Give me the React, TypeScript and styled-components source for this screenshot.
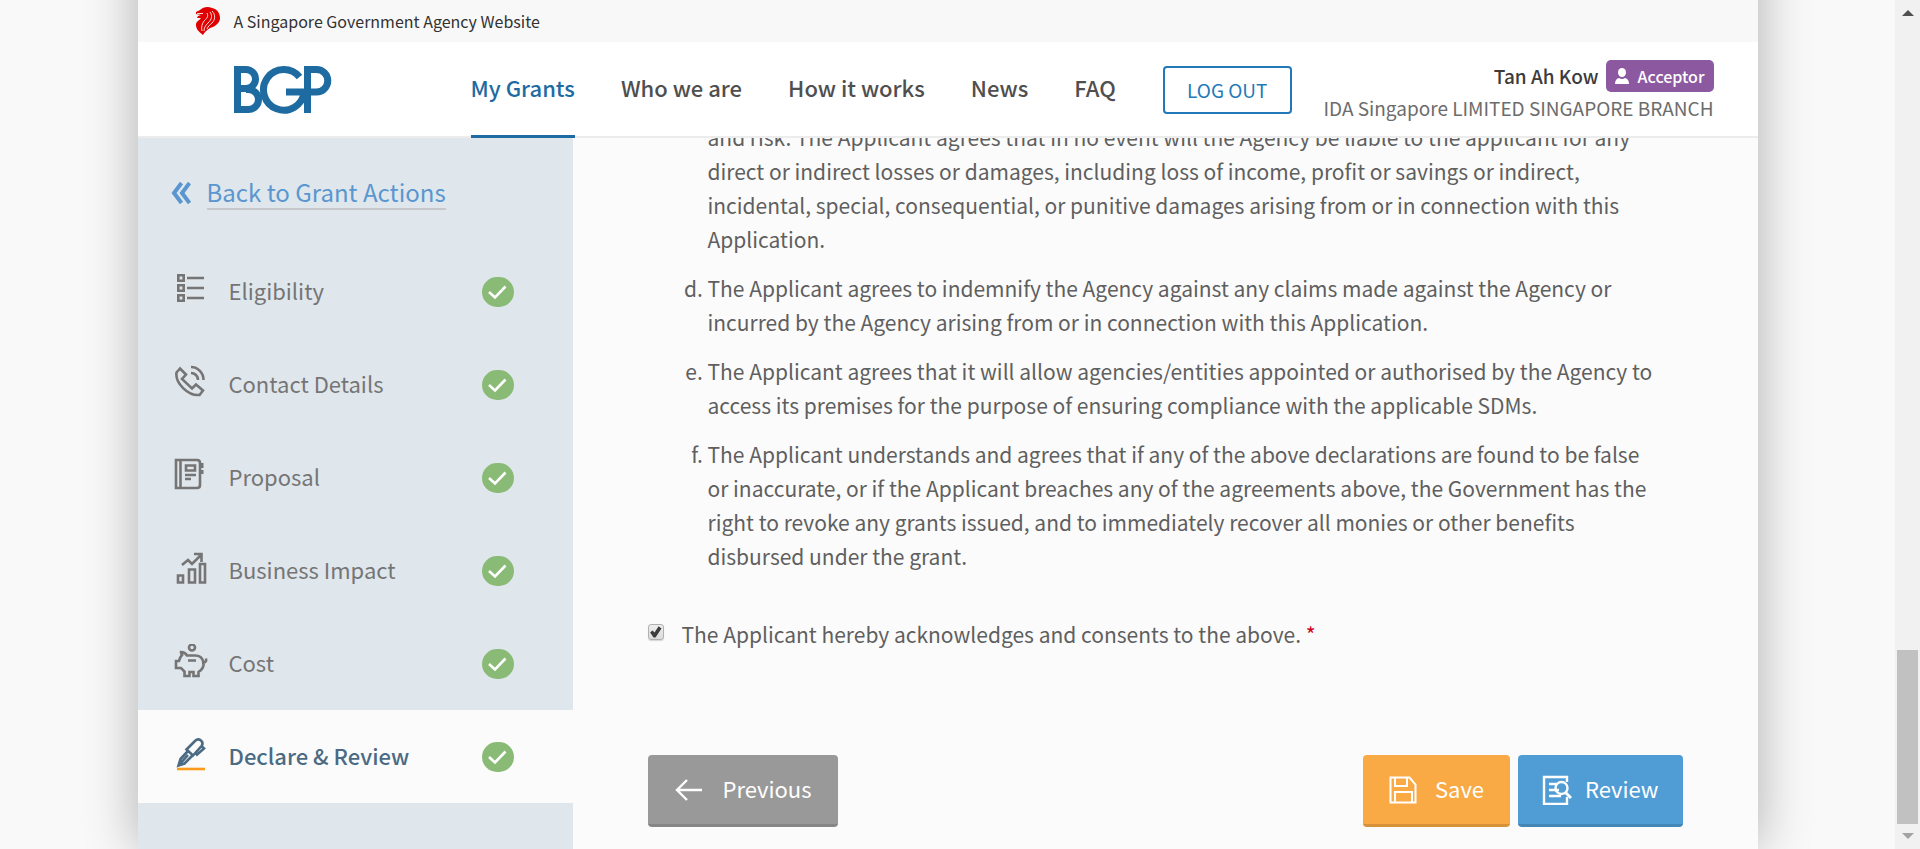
import React from 'react';
import styled, { createGlobalStyle, css } from 'styled-components';

const Global = createGlobalStyle`
  *, *::before, *::after { box-sizing: border-box; }
  body {
    margin: 0;
    background: #f9f9f9;
    color: #5f5f5f;
    font-family: "Noto Sans CJK SC", "Noto Sans", sans-serif;
    font-size: 22px;
    line-height: 34px;
  }
`;

const Page = styled.div`
  display: grid;
  grid-template-columns: minmax(0, 1fr) 25px;
  min-height: 100vh;
  overflow: hidden;
`;

const Sheet = styled.div`
  display: flex;
  flex-direction: column;
  width: 100%;
  max-width: 1620px;
  margin: -64px auto 0;
  padding-top: 64px;
  background: #fbfbfb;
  box-shadow: 0 0 50px rgba(0, 0, 0, 0.3);
`;

const AgencyBar = styled.div`
  display: flex;
  align-items: center;
  gap: 13px;
  height: 42px;
  padding-left: 57px;
  background: #f8f8f8;
  color: #323232;
  font-size: 16px;
`;

const Header = styled.header`
  position: relative;
  z-index: 1;
  display: flex;
  height: 96px;
  padding: 0 44px 0 96px;
  background: #fff;
  border-bottom: 2px solid #ececec;
`;

const LogoLink = styled.a`
  display: flex;
  align-items: center;
  width: 237px;
`;

const Nav = styled.nav`
  display: flex;
  gap: 46px;
`;

const NavLink = styled.a<{ $active?: boolean }>`
  height: 96px;
  color: ${(p) => (p.$active ? '#1e6ba1' : '#4f4f4f')};
  border-bottom: 3px solid ${(p) => (p.$active ? '#1e6ba1' : 'transparent')};
  font-size: 22px;
  font-weight: 500;
  line-height: 90px;
  text-decoration: none;
  white-space: nowrap;
`;

const LogOut = styled.button`
  width: 129px;
  height: 48px;
  margin: 24px 0 0 47px;
  padding: 0;
  border: 2px solid #217ab7;
  border-radius: 4px;
  background: #fff;
  color: #217ab7;
  font: inherit;
  font-size: 19px;
  white-space: nowrap;
`;

const Account = styled.div`
  display: flex;
  flex-direction: column;
  align-items: flex-end;
  margin-left: auto;
  padding-top: 18px;
  color: #6c6c6c;
  font-size: 19px;
  line-height: 32px;
  white-space: nowrap;
`;

const AccountName = styled.div`
  display: flex;
  gap: 7px;
  color: #3c3c3c;
  font-weight: 500;
`;

const Role = styled.span`
  display: flex;
  align-items: center;
  gap: 9px;
  padding: 0 9px;
  border-radius: 5px;
  background: #8c59a0;
  color: #fff;
  font-size: 16px;
  font-weight: 500;
`;

const Columns = styled.div`
  display: grid;
  grid-template-columns: 435px minmax(0, 1fr);
  flex: 1;
`;

const Sidebar = styled.aside`
  background: #dfe6ec;
`;

const BackLink = styled.a`
  display: flex;
  align-items: center;
  gap: 16px;
  height: 107px;
  padding: 2px 0 0 33px;
  color: #5a96cf;
  font-size: 24px;
  line-height: 32px;
  text-decoration: none;
  span {
    border-bottom: 2px solid #c6c8cb;
  }
`;

const Steps = styled.ul`
  margin: 0;
  padding: 0;
  list-style: none;
`;

const Step = styled.a<{ $active?: boolean }>`
  display: flex;
  align-items: center;
  height: 93px;
  padding: 0 59px 0 36px;
  color: #757575;
  text-decoration: none;
  ${(p) =>
    p.$active &&
    css`
      background: #fbfbfb;
      color: #4b6a84;
      font-weight: 500;
    `}
`;

const StepName = styled.span`
  flex: 1;
  margin: 0 0 4px 21px;
`;

const Content = styled.main`
  padding: 0 75px 22px;
`;

const Clauses = styled.ol`
  margin: -18px 0 0;
  padding: 0 26px 0 60px;
  font-size: 21px;
  list-style: lower-alpha;
`;

const Clause = styled.li<{ $continued?: boolean }>`
  margin-bottom: 15px;
  ${(p) => p.$continued && 'list-style: none;'}
`;

const Consent = styled.label`
  display: flex;
  align-items: flex-start;
  gap: 18px;
  margin-top: 44px;
  font-size: 21px;
`;

const Tick = styled.input`
  appearance: none;
  width: 16px;
  height: 16px;
  margin: 7px 0 0;
  border: 1px solid #b0b0b0;
  border-radius: 3px;
  background: linear-gradient(#ededed, #dcdcdc);
  box-shadow: 0 1px 1px rgba(0, 0, 0, 0.15);
  &:checked::before {
    content: '';
    display: block;
    width: 12px;
    height: 12px;
    margin: 1px;
    background: #3d3d3d;
    clip-path: polygon(5% 55%, 25% 38%, 42% 55%, 76% 2%, 100% 20%, 50% 95%, 34% 95%);
  }
`;

const Required = styled.span`
  color: #d0021b;
`;

const Actions = styled.div`
  display: flex;
  gap: 8px;
  margin-top: 104px;
`;

const tones = {
  grey: { face: '#999999', edge: '#868686', pad: 26, gap: 21 },
  orange: { face: '#f9aa44', edge: '#d6933c', pad: 26, gap: 18 },
  blue: { face: '#509dd5', edge: '#4487b7', pad: 24, gap: 13 },
};

const Action = styled.button<{ $tone: keyof typeof tones }>`
  display: flex;
  align-items: center;
  gap: ${(p) => tones[p.$tone].gap}px;
  height: 72px;
  padding: 0 ${(p) => tones[p.$tone].pad}px;
  border: 0;
  border-bottom: 3px solid ${(p) => tones[p.$tone].edge};
  border-radius: 4px;
  background: ${(p) => tones[p.$tone].face};
  color: #fff;
  font: inherit;
  &:first-child {
    margin-right: auto;
  }
`;

const ActionName = styled.span`
  margin-bottom: 4px;
`;

const Scroller = styled.div`
  display: flex;
  flex-direction: column;
  align-items: center;
  padding: 10px 0;
  background: #f1f1f1;
`;

const Thumb = styled.div`
  width: 21px;
  height: 174px;
  margin: auto 0 9px;
  background: #c1c1c1;
`;

const Lion = () => (
  <svg width="26" height="30" viewBox="0 0 26 30" aria-hidden="true">
    <path
      fill="#e00000"
      d="M1 6 5 4C8 1 13 0 17 2c5 1 8 5 8 10 0 4-3 7-7 9-4 1-8 4-10 8-4-3-7-6-7-10 0-4 3-4 5-7L2 12l1-2 3-1-5-1Z"
    />
    <path
      fill="none"
      stroke="#f8f8f8"
      strokeWidth="0.900"
      d="M2 7.500h6M12 7c2 4-1 6-3 8-2 3-3 6-2 10M15 6c3 4 1 8-1 10-3 3-5 5-5 9M17 5c4 4 3 9 0 12-2 2-4 3-5 6"
    />
  </svg>
);

const Logo = () => (
  <svg width="98" height="50" viewBox="0 0 98 50" role="img" aria-label="BGP">
    <g fill="none" stroke="#1e6ba1" strokeWidth="7">
      <path d="M3.500 2V49M0 5.500H12A9 9 0 0 1 12 24.500H3.500M12 25.500H14.500A10 10 0 0 1 14.500 45.500H0" />
      <path d="M65.500 13A20.300 20.300 0 1 0 70 28M52 28H82.500A11.200 11.200 0 0 0 82.500 5.500H70M73.500 2V49" />
    </g>
  </svg>
);

const Icon = ({ children, size = 28 }: { children: React.ReactNode; size?: number }) => (
  <svg width={size} height={size} viewBox={`0 0 ${size} ${size}`} fill="none" stroke="currentColor" strokeWidth="2" aria-hidden="true">
    {children}
  </svg>
);

const StepIcon = styled.svg`
  width: 34px;
  height: 34px;
  margin-bottom: 5px;
  fill: none;
  stroke: currentColor;
  stroke-width: 2.6;
`;

const Check = () => (
  <svg width="32" height="30" viewBox="0 0 32 30" role="img" aria-label="Completed">
    <rect width="32" height="30" rx="15" fill="#89bb76" />
    <path d="m7 15 6 5.500L23.500 9.500" fill="none" stroke="#fff" strokeWidth="2.600" />
  </svg>
);

const steps = [
  {
    name: 'Eligibility',
    icon: <path d="M4.300 3.300h5.400v5.400H4.300zM4.300 13.300h5.400v5.400H4.300zM4.300 23.300h5.400v5.400H4.300zM13 6h17M13 16h17M13 26h17" />,
  },
  {
    name: 'Contact Details',
    icon: (
      <path d="M6 3.500 2.500 7.500C1 18 14 31 25.500 30L29 25.500l-7-6-4 4L8 14l4-4.500ZM17 2c7 0 12.500 6 12.500 13M17 8c4 0 7 3 7 7" />
    ),
  },
  {
    name: 'Proposal',
    icon: (
      <>
        <path d="M2 2h21q3 0 3 3v22q0 3-3 3H2zM6.500 2v28M12 7.500h9v5h-9zM11 17h11M11 21h6" />
        <path d="M28 5v5M28 12v4" strokeWidth="3" />
      </>
    ),
  },
  {
    name: 'Business Impact',
    icon: <path d="M4 24.500h5v7H4zM15 18.500h6v13h-6zM26 13h5v18.500h-5zM8 14l6-5 4 4 9-9M20 3h7.500v8" />,
  },
  {
    name: 'Cost',
    icon: (
      <>
        <path d="M8 11q-1-1-1-3 4 0 6 3.500h8c9 0 12 11 3.500 16.500V32h-5v-4h-4v4h-5v-4.500L7 24H2v-7h3q1-4 3-6ZM14 16.500h8M32 14.500q1 4-4 5" />
        <circle cx="18" cy="3.500" r="3" />
      </>
    ),
  },
  {
    name: 'Declare & Review',
    icon: (
      <>
        <path d="m12.500 12.500 8.500-8.500c4-4 9.500 1 6.500 5l-8.500 9.500ZM14 14l-7.500 8-2 6.500 6-2 8-8M14 18l-9 10M27 8.500l3 3-8 7" />
        <path d="M3 32h28" stroke="#fb9a1c" />
      </>
    ),
    active: true,
  },
];

const clauses = [
  'and risk. The Applicant agrees that in no event will the Agency be liable to the applicant for any direct or indirect losses or damages, including loss of income, profit or savings or indirect, incidental, special, consequential, or punitive damages arising from or in connection with this Application.',
  'The Applicant agrees to indemnify the Agency against any claims made against the Agency or incurred by the Agency arising from or in connection with this Application.',
  'The Applicant agrees that it will allow agencies/entities appointed or authorised by the Agency to access its premises for the purpose of ensuring compliance with the applicable SDMs.',
  'The Applicant understands and agrees that if any of the above declarations are found to be false or inaccurate, or if the Applicant breaches any of the agreements above, the Government has the right to revoke any grants issued, and to immediately recover all monies or other benefits disbursed under the grant.',
];

export default function App() {
  return (
    <>
      <Global />
      <Page>
        <Sheet>
          <AgencyBar>
            <Lion />
            A Singapore Government Agency Website
          </AgencyBar>
          <Header>
            <LogoLink href="#home"><Logo /></LogoLink>
            <Nav>
              <NavLink href="#grants" $active>My Grants</NavLink>
              <NavLink href="#about">Who we are</NavLink>
              <NavLink href="#how">How it works</NavLink>
              <NavLink href="#news">News</NavLink>
              <NavLink href="#faq">FAQ</NavLink>
            </Nav>
            <LogOut type="button">LOG OUT</LogOut>
            <Account>
              <AccountName>
                Tan Ah Kow
                <Role>
                  <svg width="14" height="16" viewBox="0 0 14 16" fill="#fff" aria-hidden="true">
                    <ellipse cx="7" cy="4.500" rx="4" ry="4.500" />
                    <path d="M0 16q0-5 4-6 3 2 6 0 4 1 4 6z" />
                  </svg>
                  Acceptor
                </Role>
              </AccountName>
              IDA Singapore LIMITED SINGAPORE BRANCH
            </Account>
          </Header>
          <Columns>
            <Sidebar>
              <BackLink href="#actions">
                <svg width="20" height="22" viewBox="0 0 20 22" fill="none" stroke="currentColor" strokeWidth="4" aria-hidden="true">
                  <path d="M10.500 1 3 11l7.500 10M18.500 1 11 11l7.500 10" />
                </svg>
                <span>Back to Grant Actions</span>
              </BackLink>
              <Steps>
                {steps.map((s) => (
                  <li key={s.name}>
                    <Step href="#step" $active={s.active}>
                      <StepIcon viewBox="0 0 34 34" aria-hidden="true">{s.icon}</StepIcon>
                      <StepName>{s.name}</StepName>
                      <Check />
                    </Step>
                  </li>
                ))}
              </Steps>
            </Sidebar>
            <Content>
              <Clauses start={3}>
                {clauses.map((c, i) => <Clause key={c} $continued={i === 0}>{c}</Clause>)}
              </Clauses>
              <Consent>
                <Tick type="checkbox" defaultChecked />
                <span>The Applicant hereby acknowledges and consents to the above. <Required>*</Required></span>
              </Consent>
              <Actions>
                <Action type="button" $tone="grey">
                  <Icon><path d="M28 14H3M13 4 3 14l10 10" strokeWidth="2.400" /></Icon>
                  <ActionName>Previous</ActionName>
                </Action>
                <Action type="button" $tone="orange">
                  <Icon><path d="M1.500 1.500h19l6 7v18h-25zM6 2v8h12V2M6 27V16h17v11" /></Icon>
                  <ActionName>Save</ActionName>
                </Action>
                <Action type="button" $tone="blue">
                  <Icon size={30}>
                    <path d="M25 7V2H2v27h23v-7M7 9h8M7 15h10M7 21h12" strokeWidth="2.400" />
                    <circle cx="19.500" cy="13" r="6" strokeWidth="2.400" />
                    <path d="m23 17 6 6" strokeWidth="3" />
                  </Icon>
                  <ActionName>Review</ActionName>
                </Action>
              </Actions>
            </Content>
          </Columns>
        </Sheet>
        <Scroller aria-hidden="true">
          <svg width="12" height="6" viewBox="0 0 12 6"><path d="M0 6 6 0l6 6z" fill="#505050" /></svg>
          <Thumb />
          <svg width="12" height="6" viewBox="0 0 12 6"><path d="m0 0 6 6 6-6z" fill="#a3a3a3" /></svg>
        </Scroller>
      </Page>
    </>
  );
}
